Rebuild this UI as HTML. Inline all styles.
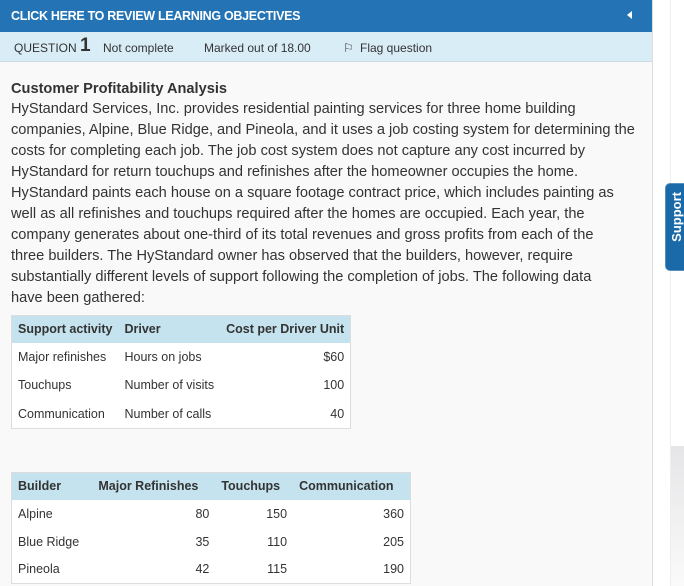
<!DOCTYPE html>
<html><head><meta charset="utf-8"><style>
*{margin:0;padding:0;box-sizing:border-box}
body{width:684px;height:586px;overflow:hidden;background:#fff;font-family:"Liberation Sans",sans-serif;color:#333;position:relative}
.main{position:absolute;left:0;top:0;width:653px;height:586px;background:#f9f9f9;border-right:1px solid #ddd;overflow:hidden}
.hdr{height:32px;background:#2474b5;color:#fff;font-size:12.5px;font-weight:bold;padding:9px 11px;letter-spacing:-0.3px;position:relative}
.hdr .arr{position:absolute;right:20px;top:11px;width:0;height:0;border-top:4px solid transparent;border-bottom:4px solid transparent;border-right:5px solid #fff}
.qb{height:30px;background:#d9edf7;border-bottom:1px solid #c9dde7;font-size:12px;color:#333;position:relative}
.qb span{position:absolute;top:9px}
.qb .n{font-size:19px;font-weight:bold;top:3px;left:80px}
.content{padding:17px 11px 0 11px;font-size:14.6px;line-height:21px;white-space:nowrap}
.content b{font-weight:bold;display:block;margin-bottom:-1px}
table{border-collapse:collapse;font-size:12.5px;background:#fff;position:absolute;left:11px;border:1px solid #ddd;white-space:nowrap}
th{background:#c5e3ee;font-weight:bold;height:27px;text-align:left;padding:0 6px;font-size:12.5px}
td{height:28px;padding:0 6px}
.r{text-align:right}
.sup{position:absolute;left:665px;top:183px;width:22px;height:88px;background:#1a69a8;border-radius:5px 0 0 5px;border:1px solid #5a8fbb;overflow:hidden}
.sup span{position:absolute;left:3px;top:8px;color:#fff;font-weight:bold;font-size:13px;writing-mode:vertical-rl;transform:rotate(180deg)}
.vl{position:absolute;left:670px;top:0;width:1px;height:586px;background:#eee}
.gr{position:absolute;left:671px;top:446px;width:13px;height:140px;background:linear-gradient(#e6e6e8,#fafafa)}
</style></head><body>
<div class="vl"></div><div class="gr"></div>
<div class="sup"><span>Support</span></div>
<div class="main">
<div class="hdr">CLICK HERE TO REVIEW LEARNING OBJECTIVES<div class="arr"></div></div>
<div class="qb"><span style="left:14px">QUESTION</span><span class="n">1</span><span style="left:103px">Not complete</span><span style="left:204px">Marked out of 18.00</span><span style="left:343px">⚐</span><span style="left:360px">Flag question</span></div>
<div class="content"><b>Customer Profitability Analysis</b>
HyStandard Services, Inc. provides residential painting services for three home building<br>
companies, Alpine, Blue Ridge, and Pineola, and it uses a job costing system for determining the<br>
costs for completing each job. The job cost system does not capture any cost incurred by<br>
HyStandard for return touchups and refinishes after the homeowner occupies the home.<br>
HyStandard paints each house on a square footage contract price, which includes painting as<br>
well as all refinishes and touchups required after the homes are occupied. Each year, the<br>
company generates about one-third of its total revenues and gross profits from each of the<br>
three builders. The HyStandard owner has observed that the builders, however, require<br>
substantially different levels of support following the completion of jobs. The following data<br>
have been gathered:</div>
<table style="top:315px;width:339px">
<tr><th>Support activity</th><th>Driver</th><th class="r">Cost per Driver Unit</th></tr>
<tr><td style="height:28.5px">Major refinishes</td><td>Hours on jobs</td><td class="r">$60</td></tr>
<tr><td style="height:28.5px">Touchups</td><td>Number of visits</td><td class="r">100</td></tr>
<tr><td style="height:28.5px">Communication</td><td>Number of calls</td><td class="r">40</td></tr>
</table>
<table style="top:472px;width:400px">
<tr><th>Builder</th><th>Major Refinishes</th><th>Touchups</th><th>Communication</th></tr>
<tr><td>Alpine</td><td class="r">80</td><td class="r">150</td><td class="r">360</td></tr>
<tr><td>Blue Ridge</td><td class="r">35</td><td class="r">110</td><td class="r">205</td></tr>
<tr><td>Pineola</td><td class="r">42</td><td class="r">115</td><td class="r">190</td></tr>
</table>
</div>
</body></html>
